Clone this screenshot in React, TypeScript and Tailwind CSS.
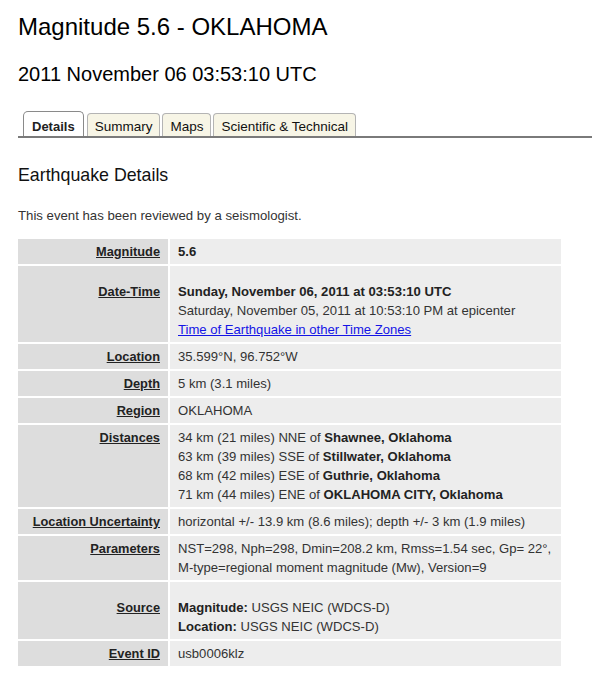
import React from "react";

type Row = {
  label: string;
  top?: boolean;
  value: React.ReactNode;
};

const rows: Row[] = [
  { label: "Magnitude", value: <b className="text-[#222]">5.6</b> },
  {
    label: "Date-Time",
    top: true,
    value: (
      <>
        <b className="block text-[#222]">Sunday, November 06, 2011 at 03:53:10 UTC</b>
        <span className="block">Saturday, November 05, 2011 at 10:53:10 PM at epicenter</span>
        <a href="#" className="block text-[#1414e6] underline">
          Time of Earthquake in other Time Zones
        </a>
      </>
    ),
  },
  { label: "Location", value: "35.599°N, 96.752°W" },
  { label: "Depth", value: "5 km (3.1 miles)" },
  { label: "Region", value: "OKLAHOMA" },
  {
    label: "Distances",
    value: (
      <>
        <span className="block">
          34 km (21 miles) NNE of <b className="text-[#222]">Shawnee, Oklahoma</b>
        </span>
        <span className="block">
          63 km (39 miles) SSE of <b className="text-[#222]">Stillwater, Oklahoma</b>
        </span>
        <span className="block">
          68 km (42 miles) ESE of <b className="text-[#222]">Guthrie, Oklahoma</b>
        </span>
        <span className="block">
          71 km (44 miles) ENE of <b className="text-[#222]">OKLAHOMA CITY, Oklahoma</b>
        </span>
      </>
    ),
  },
  {
    label: "Location Uncertainty",
    value: "horizontal +/- 13.9 km (8.6 miles); depth +/- 3 km (1.9 miles)",
  },
  {
    label: "Parameters",
    value: (
      <>
        <span className="block">
          NST=298, Nph=298, Dmin=208.2 km, Rmss=1.54 sec, Gp= 22°,
        </span>
        <span className="block">M-type=regional moment magnitude (Mw), Version=9</span>
      </>
    ),
  },
  {
    label: "Source",
    top: true,
    value: (
      <>
        <span className="block">
          <b className="text-[#222]">Magnitude:</b> USGS NEIC (WDCS-D)
        </span>
        <span className="block">
          <b className="text-[#222]">Location:</b> USGS NEIC (WDCS-D)
        </span>
      </>
    ),
  },
  { label: "Event ID", value: "usb0006klz" },
];

const tabs = ["Details", "Summary", "Maps", "Scientific & Technical"];

export default function App() {
  return (
    <div className="min-h-screen bg-white pl-[18px] pt-[13px] font-['Liberation_Sans',Arial,Helvetica,sans-serif] text-black">
      <h1 className="text-[24px] leading-[28px]">Magnitude 5.6 - OKLAHOMA</h1>
      <h2 className="mt-[21px] text-[20px] leading-[24px]">2011 November 06 03:53:10 UTC</h2>

      {/* tabs */}
      <div className="mt-[25px] flex items-end gap-[2px] border-b-2 border-[#7a7a7a] pl-[5px]">
        {tabs.map((t, i) =>
          i === 0 ? (
            <div
              key={t}
              className="mr-[1px] rounded-t-[5px] border border-b-0 border-[#8a8a8a] bg-white px-[8px] pt-[5px] text-[13px] leading-[19px] font-bold text-[#222]"
            >
              {t}
            </div>
          ) : (
            <div
              key={t}
              className="rounded-t-[4px] border border-b-0 border-[#b4b4b4] bg-[#f7f5e6] px-[7px] pt-[3px] text-[13.5px] leading-[19px] text-[#111]"
            >
              {t}
            </div>
          )
        )}
      </div>

      <h3 className="mt-[26px] text-[17.8px] leading-[22px] text-[#111]">Earthquake Details</h3>
      <p className="mt-[20px] text-[13.2px] leading-[19px] text-[#333]">
        This event has been reviewed by a seismologist.
      </p>

      <div className="mt-[14px] grid w-[543px] grid-cols-[150px_391px] gap-[2px] leading-[19px]">
        {rows.map((r) => (
          <React.Fragment key={r.label}>
            <div
              className={`bg-[#dddddd] pr-[8px] pb-[3px] text-right text-[12.8px] font-bold text-[#222] ${
                r.top ? "pt-[16px]" : "pt-[3px]"
              }`}
            >
              <a href="#" className="underline">
                {r.label}
              </a>
            </div>
            <div
              className={`bg-[#ededed] pl-[8px] pb-[3px] text-[13.1px] text-[#333] ${
                r.top ? "pt-[16px]" : "pt-[3px]"
              }`}
            >
              {r.value}
            </div>
          </React.Fragment>
        ))}
      </div>
    </div>
  );
}
